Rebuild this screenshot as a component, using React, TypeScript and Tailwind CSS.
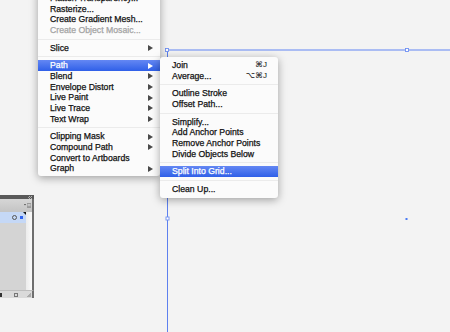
import type { ReactNode } from 'react';

type Item =
  | { kind: 'sep' }
  | { kind: 'item'; label: string; sub?: boolean; key?: string; active?: boolean; disabled?: boolean };

const mainItems: Item[] = [
  { kind: 'item', label: 'Flatten Transparency...' },
  { kind: 'item', label: 'Rasterize...' },
  { kind: 'item', label: 'Create Gradient Mesh...' },
  { kind: 'item', label: 'Create Object Mosaic...', disabled: true },
  { kind: 'sep' },
  { kind: 'item', label: 'Slice', sub: true },
  { kind: 'sep' },
  { kind: 'item', label: 'Path', sub: true, active: true },
  { kind: 'item', label: 'Blend', sub: true },
  { kind: 'item', label: 'Envelope Distort', sub: true },
  { kind: 'item', label: 'Live Paint', sub: true },
  { kind: 'item', label: 'Live Trace', sub: true },
  { kind: 'item', label: 'Text Wrap', sub: true },
  { kind: 'sep' },
  { kind: 'item', label: 'Clipping Mask', sub: true },
  { kind: 'item', label: 'Compound Path', sub: true },
  { kind: 'item', label: 'Convert to Artboards' },
  { kind: 'item', label: 'Graph', sub: true },
];

const pathItems: Item[] = [
  { kind: 'item', label: 'Join', key: '⌘J' },
  { kind: 'item', label: 'Average...', key: '⌥⌘J' },
  { kind: 'sep' },
  { kind: 'item', label: 'Outline Stroke' },
  { kind: 'item', label: 'Offset Path...' },
  { kind: 'sep' },
  { kind: 'item', label: 'Simplify...' },
  { kind: 'item', label: 'Add Anchor Points' },
  { kind: 'item', label: 'Remove Anchor Points' },
  { kind: 'item', label: 'Divide Objects Below' },
  { kind: 'sep' },
  { kind: 'item', label: 'Split Into Grid...', active: true },
  { kind: 'sep' },
  { kind: 'item', label: 'Clean Up...' },
];

function Arrow({ white }: { white?: boolean }) {
  return (
    <svg width="5" height="6" viewBox="0 0 5 6" className="ml-auto mr-[7px] shrink-0">
      <polygon points="0,0 5,3 0,6" fill={white ? '#ffffff' : '#4a4a4a'} />
    </svg>
  );
}

function MenuRows({ items }: { items: Item[] }) {
  return (
    <>
      {items.map((it, i) => {
        if (it.kind === 'sep') {
          return (
            <div key={i} className="h-[7px] flex items-center">
              <div className="h-px w-full bg-[#ebebeb]" />
            </div>
          );
        }
        const rowCls = it.active
          ? 'bg-gradient-to-b from-[#6487f3] to-[#2f5fe8] text-white'
          : it.disabled
            ? 'text-[#a3a3a3]'
            : 'text-[#111]';
        return (
          <div key={i} className={`h-[10.67px] flex items-center pl-[12px] whitespace-nowrap ${rowCls}`}>
            <span className="[-webkit-text-stroke:0.25px_currentColor]">{it.label}</span>
            {it.sub ? <Arrow white={it.active} /> : null}
            {it.key ? <span className="ml-auto mr-[11px] text-[8px]">{it.key}</span> : null}
          </div>
        );
      })}
    </>
  );
}

function Panel(): ReactNode {
  return (
    <div className="absolute left-0 top-[195px] w-[34px] flex flex-col">
      <div className="h-[4px] bg-[#595959] flex items-center justify-end pr-[2px]">
        <svg width="4" height="3" viewBox="0 0 4 3">
          <path d="M2 0 L0.5 1.5 L2 3 M4 0 L2.5 1.5 L4 3" stroke="#cfcfcf" strokeWidth="0.8" fill="none" />
        </svg>
      </div>
      <div className="h-[13px] bg-gradient-to-b from-[#d6d6d6] to-[#c4c4c4] border-r-2 border-[#6e6e6e] flex items-center justify-end pr-[1px]">
        <svg width="7" height="5" viewBox="0 0 7 5">
          <polygon points="0,1 2,1 1,2.5" fill="#444" />
          <rect x="3" y="0" width="4" height="5" fill="#9a9a9a" />
          <rect x="3.5" y="1" width="3" height="0.6" fill="#e8e8e8" />
          <rect x="3.5" y="2.5" width="3" height="0.6" fill="#e8e8e8" />
        </svg>
      </div>
      <div className="flex border-r-2 border-[#6e6e6e]">
        <div className="flex-1 flex flex-col">
          <div className="h-[11px] bg-[#c5d8f6] flex items-center gap-[3px] pl-[12px] relative">
            <div className="w-[5px] h-[5px] rounded-full border border-[#555]" />
            <div className="w-[3px] h-[3px] bg-[#2f62f0]" />
            <svg width="3" height="3" viewBox="0 0 3 3" className="absolute right-0 top-0">
              <polygon points="0,0 3,0 3,3" fill="#111" />
            </svg>
          </div>
          <div className="h-[67px] bg-[#d4d4d4]" />
        </div>
        <div className="w-[6px] bg-gradient-to-r from-[#ececec] to-[#fafafa]" />
      </div>
      <div className="h-[8px] bg-[#dadada] border-r-2 border-[#6e6e6e] border-t border-t-[#bdbdbd] flex items-center">
        <div className="w-[2px] h-[4px] bg-[#333]" />
        <div className="ml-[12px] w-[4px] h-[4px] border border-[#777]" />
        <div className="ml-auto mr-[1px] w-[4px] h-[4px] bg-[linear-gradient(135deg,transparent_50%,#aaa_50%)]" />
      </div>
    </div>
  );
}

export default function App() {
  return (
    <div
      className="relative w-[450px] h-[332px] overflow-hidden bg-[#f3f3f3] text-[8.7px] leading-none"
      style={{ fontFamily: '"Liberation Sans", "DejaVu Sans", Arial, sans-serif' }}
    >
      <svg width="450" height="332" viewBox="0 0 450 332" className="absolute inset-0">
        <line x1="167" y1="50" x2="450" y2="50" stroke="#92aaf3" strokeWidth="1.4" />
        <line x1="167.5" y1="50" x2="167.5" y2="332" stroke="#5d80ef" strokeWidth="1" />
        <rect x="165.5" y="48.5" width="3" height="3" fill="#fff" stroke="#6f90f2" strokeWidth="0.9" />
        <rect x="405.5" y="48.5" width="3" height="3" fill="#fff" stroke="#6f90f2" strokeWidth="0.9" />
        <rect x="166" y="217" width="3" height="3" fill="#fff" stroke="#6f90f2" strokeWidth="0.9" />
        <rect x="405.5" y="218" width="2" height="2" fill="#4a7bf4" />
      </svg>

      <Panel />

      <div className="absolute left-[38px] top-[-10px] w-[122px] pt-[3px] pb-[2px] bg-[#fbfbfb] rounded-b-[3px] shadow-[0_2px_8px_rgba(0,0,0,0.35)]">
        <MenuRows items={mainItems} />
      </div>

      <div className="absolute left-[160px] top-[57px] w-[118px] pt-[3px] pb-[3px] bg-[#fbfbfb] rounded-[3px] shadow-[0_2px_8px_rgba(0,0,0,0.35)]">
        <MenuRows items={pathItems} />
      </div>
    </div>
  );
}
